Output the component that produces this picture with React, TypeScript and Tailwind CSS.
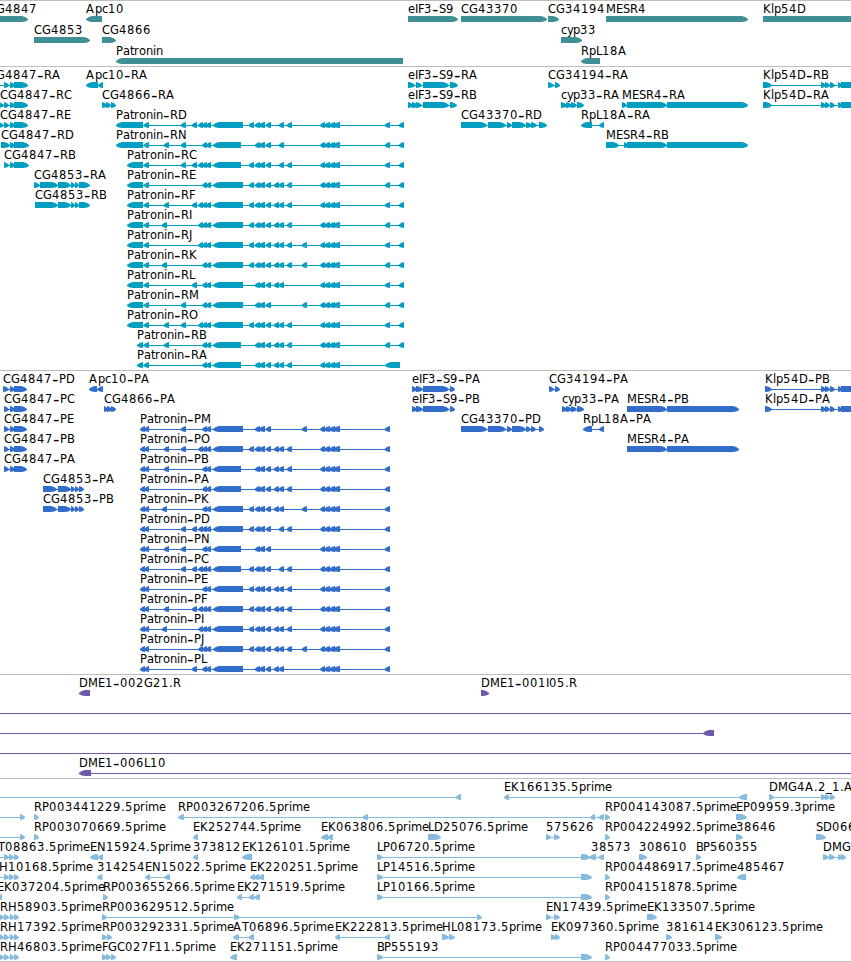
type Feature = {
  row: number
  label: string
  x: number
  dir: 'fwd' | 'rev'
  // flat list of start, end pairs
  spans: number[]
  line?: [number, number]
}

const fwd = (row: number, label: string, x: number, spans: number[], line?: [number, number]): Feature => ({
  row,
  label,
  x,
  dir: 'fwd',
  spans,
  line,
})

const rev = (row: number, label: string, x: number, spans: number[], line?: [number, number]): Feature => ({
  row,
  label,
  x,
  dir: 'rev',
  spans,
  line,
})

const ADVANCE: Record<string, number> = {
  A: 9, B: 7, C: 8, D: 9, E: 7, F: 6, G: 9, H: 9, I: 3, J: 4, K: 8, L: 6, M: 10, N: 9, O: 9, P: 7, R: 8, S: 7, T: 7,
  a: 7, c: 6, e: 7, i: 3, l: 3, m: 11, n: 7, o: 7, p: 7, r: 5, t: 4, y: 6, '-': 7, '.': 4, _: 6,
}

// splits a label at its hyphens and gives every glyph an x of its own
function labelRuns(label: string, x: number) {
  let pos = x
  return label.split(/(-)/).map((text) => {
    const xs = text.split('').map((ch) => {
      const at = pos
      pos += ADVANCE[ch] ?? 8
      return at
    })
    return { text, xs: xs.join(' ') }
  })
}

// exons shared by the Patronin isoforms
const EXONS: Record<string, number[]> = {
  utrLong: [116, 143, 143.5, 149],
  utr: [127, 143, 143.5, 149],
  utrShort: [137, 143, 143.5, 149],
  cds: [140, 145, 144, 149],
  c: [161.5, 167],
  f: [163.5, 169],
  d: [180.5, 186],
  e: [191.5, 197],
  g: [198, 203, 202, 207, 206, 211],
  h: [202, 207, 206, 211],
  big: [213, 243],
  mid: [213, 241],
  i: [248.5, 254],
  j: [254.5, 260, 258.5, 265],
  k: [265.5, 271],
  l: [273.5, 279, 278.5, 284],
  s: [278.5, 284],
  m: [286.5, 292],
  n: [301.5, 307],
  o: [320, 325, 324, 330, 329, 335, 333, 340],
  p: [384.5, 390],
  q: [398.5, 404],
  start: [385, 400],
}

function patronin(row: number, name: string, x: number, exons: string) {
  return rev(
    row,
    `Patronin-${name}`,
    x,
    exons.split(' ').flatMap((key) => EXONS[key])
  )
}

const genes: Feature[] = [
  fwd(0, 'CG4847', -12, [-30, 28]),
  rev(0, 'Apc10', 86, [86, 102]),
  fwd(0, 'eIF3-S9', 408, [408, 458]),
  fwd(0, 'CG43370', 461, [461, 547]),
  fwd(0, 'CG34194', 548, [548, 559]),
  fwd(0, 'MESR4', 606, [606, 748]),
  fwd(0, 'Klp54D', 763, [763, 900]),
  fwd(1, 'CG4853', 34, [34, 90]),
  fwd(1, 'CG4866', 102, [102, 116]),
  fwd(1, 'cyp33', 561, [561, 582]),
  rev(2, 'Patronin', 116, [116, 403]),
  rev(2, 'RpL18A', 581, [581, 600]),
]

const KLP_TAIL = [821, 826, 825, 830, 830, 835, 838, 842, 841, 900]

const transcripts: Feature[] = [
  fwd(0, 'CG4847-RA', -12, [4, 9, 10, 15, 14, 28], [-20, 28]),
  rev(0, 'Apc10-RA', 86, [86, 98, 98, 103]),
  fwd(0, 'eIF3-S9-RA', 408, [408, 415, 416, 422, 423, 449, 450, 458]),
  fwd(0, 'CG34194-RA', 548, [548, 554, 555, 560]),
  fwd(0, 'Klp54D-RB', 763, [763, 772, ...KLP_TAIL]),
  fwd(1, 'CG4847-RC', 0, [-2, 4, 4, 9, 10, 15, 14, 28]),
  fwd(1, 'CG4866-RA', 102, [102, 107, 106, 111, 111, 116]),
  fwd(1, 'eIF3-S9-RB', 408, [408, 413, 412, 418, 416, 422, 423, 449, 450, 457]),
  fwd(1, 'cyp33-RA', 561, [561, 567, 566, 572, 571, 577, 577, 584]),
  fwd(1, 'MESR4-RA', 622, [622, 627, 627, 667, 667, 748]),
  fwd(1, 'Klp54D-RA', 763, [763, 772, ...KLP_TAIL]),
  fwd(2, 'CG4847-RE', 0, [-2, 4, 4, 9, 10, 15, 14, 28]),
  fwd(2, 'CG43370-RD', 461, [461, 487, 488, 506, 507, 512, 512, 526, 526, 532, 531, 537, 539, 547]),
  rev(2, 'RpL18A-RA', 581, [581, 592, 599, 604]),
  fwd(3, 'CG4847-RD', 1, [1, 10, 10, 15, 14, 29]),
  fwd(3, 'MESR4-RB', 606, [606, 619, 624, 628, 627, 667, 667, 748]),
  fwd(4, 'CG4847-RB', 4, [4, 9, 10, 15, 14, 29]),
  fwd(5, 'CG4853-RA', 34, [34, 40, 40, 58, 58, 71, 71, 75, 75, 79, 79, 90]),
  fwd(6, 'CG4853-RB', 35, [35, 58, 58, 71, 71, 75, 75, 79, 79, 90]),
  patronin(2, 'RD', 116, 'utrLong d e g big i j k s m o p q'),
  patronin(3, 'RN', 116, 'utrLong f d h mid j k s o p q'),
  patronin(4, 'RC', 127, 'utr d e g mid i j k s m o p q'),
  patronin(5, 'RE', 127, 'utr h big i j k l m o p q'),
  patronin(6, 'RF', 127, 'utr f e g big i j k l m o p q'),
  patronin(7, 'RI', 127, 'utr c g big i j k l m o p q'),
  patronin(8, 'RJ', 127, 'utr g big i j k l m n o p q'),
  patronin(9, 'RK', 127, 'utr c h big i j k l m n o p q'),
  patronin(10, 'RL', 127, 'utr e h big j k l o p q'),
  patronin(11, 'RM', 127, 'utr d h big j k n o p q'),
  patronin(12, 'RO', 127, 'utr f d g big i j k l m o p q'),
  patronin(13, 'RB', 137, 'utrShort f h mid j k l m o p q'),
  patronin(14, 'RA', 137, 'utrShort h mid j k l m o start'),
]

const CG4853_CDS = [43, 57, 58, 71, 71, 75, 75, 79, 79, 84]

const proteins: Feature[] = [
  fwd(0, 'CG4847-PD', 3, [3, 9, 10, 15, 14, 27]),
  rev(0, 'Apc10-PA', 89, [89, 97, 97, 103]),
  fwd(0, 'eIF3-S9-PA', 412, [412, 417, 416, 423, 423, 449, 450, 455]),
  fwd(0, 'CG34194-PA', 549, [549, 554, 555, 560]),
  fwd(0, 'Klp54D-PB', 765, [765, 772, ...KLP_TAIL]),
  fwd(1, 'CG4847-PC', 4, [4, 9, 10, 15, 14, 27]),
  fwd(1, 'CG4866-PA', 104, [104, 108, 107, 112, 111, 116]),
  fwd(1, 'eIF3-S9-PB', 412, [412, 417, 416, 423, 423, 449, 450, 455]),
  fwd(1, 'cyp33-PA', 562, [562, 567, 566, 572, 571, 577, 577, 584]),
  fwd(1, 'MESR4-PB', 627, [627, 667, 667, 739]),
  fwd(1, 'Klp54D-PA', 765, [765, 772, ...KLP_TAIL]),
  fwd(2, 'CG4847-PE', 4, [4, 9, 10, 15, 14, 27]),
  fwd(2, 'CG43370-PD', 461, [461, 487, 488, 506, 507, 512, 512, 526, 526, 531, 531, 536, 539, 544]),
  rev(2, 'RpL18A-PA', 583, [583, 592, 599, 604]),
  fwd(3, 'CG4847-PB', 4, [4, 9, 10, 15, 14, 27]),
  fwd(3, 'MESR4-PA', 627, [627, 667, 667, 739]),
  fwd(4, 'CG4847-PA', 4, [4, 9, 10, 15, 14, 27]),
  fwd(5, 'CG4853-PA', 43, CG4853_CDS),
  fwd(6, 'CG4853-PB', 43, CG4853_CDS),
  patronin(2, 'PM', 140, 'cds d h big j k n o p'),
  patronin(3, 'PO', 140, 'cds f d g big i j k l m o p'),
  patronin(4, 'PB', 140, 'cds f h mid j k l m o p'),
  patronin(5, 'PA', 140, 'cds h mid j k l m o p'),
  patronin(6, 'PK', 140, 'cds c h big i j k l n o p'),
  patronin(7, 'PD', 140, 'cds d e g big i j k s m o p'),
  patronin(8, 'PN', 140, 'cds f d h mid j k o p'),
  patronin(9, 'PC', 140, 'cds d e g mid i j k s m o p'),
  patronin(10, 'PE', 140, 'cds h big i j k l m o p'),
  patronin(11, 'PF', 140, 'cds f e g big i j k l m o p'),
  patronin(12, 'PI', 140, 'cds c g big i j k l m o p'),
  patronin(13, 'PJ', 140, 'cds g big i j k l m n o p'),
  patronin(14, 'PL', 140, 'cds e h big j k l o p'),
]

const clones: Feature[] = [
  rev(0, 'DME1-002G21.R', 79, [79, 90]),
  fwd(0, 'DME1-001I05.R', 481, [481, 489]),
  rev(1, '', 0, [], [0, 851]),
  rev(2, '', 0, [703, 714], [0, 714]),
  rev(3, '', 0, [], [0, 851]),
  rev(4, 'DME1-006L10', 79, [79, 91], [79, 851]),
]

const RH_EXONS = [-1, 4, 4, 9, 10, 14, 14, 19]

const ests: Feature[] = [
  rev(0, '', 0, [455.5, 461], [0, 461]),
  rev(0, 'EK166135.5prime', 504, [504, 509, 739, 747]),
  fwd(0, 'DMG4A.2_1.A', 769, [769, 774, 821, 826, 825, 830, 830, 835]),
  fwd(1, '', 0, [20, 25], [0, 25]),
  fwd(1, 'RP003441229.5prime', 34, [34, 39]),
  rev(1, 'RP003267206.5prime', 178, [178, 184, 362.5, 368, 590, 595, 598.5, 604]),
  fwd(1, 'RP004143087.5prime', 605, [605, 610]),
  fwd(1, 'EP09959.3prime', 736, [736, 747]),
  fwd(2, '', 0, [20, 25], [0, 25]),
  fwd(2, 'RP003070669.5prime', 34, [34, 39]),
  rev(2, 'EK252744.5prime', 193, [193, 198]),
  rev(2, 'EK063806.5prime', 321, [321, 328, 327, 333]),
  fwd(2, 'LD25076.5prime', 428, [428, 441]),
  fwd(2, '575626', 546, [546, 551, 554, 560]),
  fwd(2, 'RP004224992.5prime', 605, [605, 610]),
  fwd(2, '38646', 736, [736, 743]),
  fwd(2, 'SD06613.5prime', 816, [816, 826]),
  fwd(3, 'AT08863.5prime', -11, [4, 9, 9, 14, 14, 19], [0, 19]),
  rev(3, 'EN15924.5prime', 90, [90, 98, 98, 103]),
  rev(3, '373812', 193, [193, 198]),
  rev(3, 'EK126101.5prime', 242, [242, 252]),
  fwd(3, 'LP06720.5prime', 377, [377, 383, 581, 590]),
  rev(3, '38573', 591, [589, 596, 598.5, 604]),
  fwd(3, '308610', 639, [639, 647]),
  fwd(3, 'BP560355', 696, [696, 701]),
  fwd(3, 'DMG4B.2_1.A', 823, [823, 829, 829, 835, 838, 842, 841, 846]),
  fwd(4, 'GH10168.5prime', -10, [4, 9, 9, 14, 14, 19], [0, 19]),
  rev(4, '314254', 97, [97, 102.5]),
  rev(4, 'EN15022.5prime', 145, [145, 150, 164, 170]),
  rev(4, 'EK220251.5prime', 250, [250, 255, 254, 259, 258, 264]),
  fwd(4, 'LP14516.5prime', 377, [377, 383, 581, 592]),
  fwd(4, 'RP004486917.5prime', 605, [605, 610]),
  rev(4, '485467', 737, [737, 746]),
  rev(5, 'EK037204.5prime', -3, [-3, 2]),
  fwd(5, 'RP003655266.5prime', 103, [103, 108]),
  rev(5, 'EK271519.5prime', 237, [237, 242, 249, 254, 254, 260]),
  fwd(5, 'LP10166.5prime', 377, [377, 383, 581, 592]),
  fwd(5, 'RP004151878.5prime', 605, [605, 610]),
  fwd(6, 'RH58903.5prime', 0, RH_EXONS),
  fwd(6, 'RP003629512.5prime', 102, [102, 107, 234, 240, 477, 482]),
  fwd(6, 'EN17439.5prime', 546, [546, 551, 554, 560]),
  fwd(6, 'EK133507.5prime', 647, [647, 657]),
  fwd(7, 'RH17392.5prime', 0, RH_EXONS),
  fwd(7, 'RP003292331.5prime', 102, [102, 107, 107, 112]),
  rev(7, 'AT06896.5prime', 233, [233, 239, 248.5, 254]),
  rev(7, 'EK222813.5prime', 335, [335, 340, 384.5, 390]),
  fwd(7, 'HL08173.5prime', 442, [442, 449, 449, 455]),
  fwd(7, 'EK097360.5prime', 551, [551, 556, 555, 560]),
  fwd(7, '381614', 666, [666, 672]),
  fwd(7, 'EK306123.5prime', 715, [715, 722]),
  fwd(8, 'RH46803.5prime', 0, RH_EXONS),
  fwd(8, 'FGC027F11.5prime', 102, [102, 107, 106, 111, 111, 116]),
  rev(8, 'EK271151.5prime', 230, [230, 237]),
  fwd(8, 'BP555193', 377, [377, 383, 581, 592]),
  fwd(8, 'RP004477033.5prime', 605, [605, 610]),
]

// box with a slightly rounded arrow head at one end
function arrowPath(dir: Feature['dir'], start: number, end: number, top: number) {
  const head = Math.min(6, end - start)
  const tip = dir === 'fwd' ? end : start
  const base = dir === 'fwd' ? start : end
  const step = dir === 'fwd' ? -1 : 1
  const neck = tip + step * head
  const mid = tip + step * head * 0.45
  return `M${base} ${top}H${neck}L${mid} ${top + 1}L${tip} ${top + 3}V${top + 4}L${mid} ${top + 5.5}L${neck} ${top + 6}H${base}Z`
}

function FeatureGlyph({ feature, pitch }: { feature: Feature; pitch: number }) {
  const { row, label, x, dir, spans } = feature
  const y = row * pitch
  const line = feature.line ?? [Math.min(...spans), Math.max(...spans)]
  const pairs = spans.flatMap((start, i) => (i % 2 === 0 ? [[start, spans[i + 1]]] : []))
  return (
    <g>
      <rect x={line[0]} y={y + 18} width={line[1] - line[0]} height="1" />
      <path d={pairs.map(([start, end]) => arrowPath(dir, start, end, y + 15)).join('')} />
      {label && (
        <text className="fill-black">
          {labelRuns(label, x).map((run, i) =>
            run.text === '-' ? (
              <tspan key={i} x={run.xs} y={y + 14} className="text-[18px]">
                -
              </tspan>
            ) : (
              <tspan key={i} x={run.xs} y={y + 12}>
                {run.text}
              </tspan>
            )
          )}
        </text>
      )}
    </g>
  )
}

function Track({
  features,
  className,
  pitch = 20,
}: {
  features: Feature[]
  className: string
  pitch?: number
}) {
  return (
    <section className={`overflow-hidden border-t border-[#bebebe] ${className}`}>
      <svg className="block h-full w-[851px] fill-current text-[11.5px]">
        {features.map((feature, i) => (
          <FeatureGlyph key={i} feature={feature} pitch={pitch} />
        ))}
      </svg>
    </section>
  )
}

export default function App() {
  return (
    <main className="flex h-[962px] w-[851px] flex-col overflow-hidden border-b border-[#bebebe] bg-white font-['DejaVu_Sans',sans-serif]">
      <Track features={genes} pitch={21} className="h-[66px] text-[#408f94]" />
      <Track features={transcripts} className="h-[304px] text-[#009fc2]" />
      <Track features={proteins} className="h-[304px] text-[#326dcc]" />
      <Track features={clones} className="h-[104px] text-[#7157a7]" />
      <Track features={ests} className="h-[183px] text-[#87bbdd]" />
    </main>
  )
}
